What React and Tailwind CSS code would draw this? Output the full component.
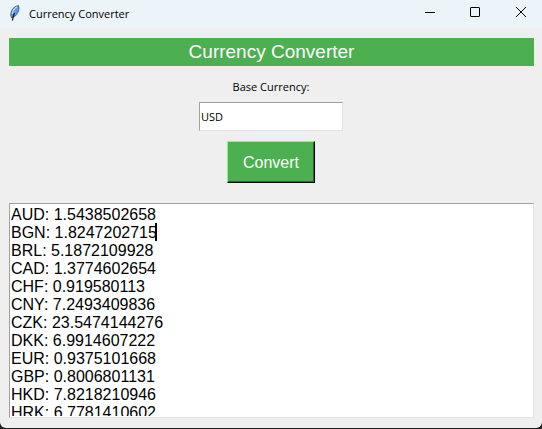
import { useState } from "react";

const RATES = [
  ["AUD", "1.5438502658"],
  ["BGN", "1.8247202715"],
  ["BRL", "5.1872109928"],
  ["CAD", "1.3774602654"],
  ["CHF", "0.919580113"],
  ["CNY", "7.2493409836"],
  ["CZK", "23.5474144276"],
  ["DKK", "6.9914607222"],
  ["EUR", "0.9375101668"],
  ["GBP", "0.8006801131"],
  ["HKD", "7.8218210946"],
  ["HRK", "6.7781410602"],
];

function Feather() {
  return (
    <svg className="h-4 w-4" viewBox="0 0 16 16" aria-hidden="true">
      <path d="M11.500 .5C8 1 5 3.500 4 7.500c-.4 2-.2 3.800.4 5.300C7.500 12.300 9.700 10 10.900 7.500c1.200-2.400 1.400-4.800.6-7z" fill="#5b9cf0" stroke="#4a5058" strokeWidth=".8" />
      <path d="M10 2C7.500 3.200 5.800 5.500 5.200 9" fill="none" stroke="#c4defa" strokeWidth="1.200" />
      <path d="M7.500 8C6.500 10 5.800 12 5.500 15.500" fill="none" stroke="#0c0e12" strokeWidth="1.200" />
    </svg>
  );
}

function TitleBar() {
  const control = "flex h-7 w-[46px] items-center justify-center";
  return (
    <header className="flex h-7 items-center bg-[#ebf4f9] pl-[7px]">
      <div className="pb-0.5">
        <Feather />
      </div>
      <span className="ml-1.5 flex-1 pb-px text-[11px] leading-4">Currency Converter</span>
      <div className="-mr-0.5 flex pb-1">
        <button type="button" aria-label="Minimize" className={control}>
          <svg className="h-3 w-3" viewBox="0 0 12 12"><path d="M2 6.500h10" stroke="#000" fill="none" /></svg>
        </button>
        <button type="button" aria-label="Maximize" className={control}>
          <svg className="h-3 w-3" viewBox="0 0 12 12"><rect x="1.500" y="1.500" width="9" height="9" rx=".5" stroke="#000" fill="none" /></svg>
        </button>
        <button type="button" aria-label="Close" className={control}>
          <svg className="h-3 w-3" viewBox="0 0 12 12"><path d="M1 1l10 10M11 1L1 11" stroke="#000" fill="none" /></svg>
        </button>
      </div>
    </header>
  );
}

export default function App() {
  const [base, setBase] = useState("USD");
  return (
    <div className="bg-[#202020] font-['Open_Sans','Noto_Sans',sans-serif] text-black">
      <div className="overflow-hidden rounded-b-md bg-[#efefef]">
        <TitleBar />
        <main className="pt-2.5 pr-2 pb-2.5 pl-[9px]">
          <h1 className="bg-[#4caf50] text-center font-['Liberation_Sans',Arial,sans-serif] text-[19px] leading-7 text-white">
            Currency Converter
          </h1>
          <form className="flex flex-col items-center pt-3 pr-px" onSubmit={(e) => e.preventDefault()}>
            <label htmlFor="base" className="text-[11px] leading-[18px]">Base Currency:</label>
            <input
              id="base"
              value={base}
              onChange={(e) => setBase(e.target.value)}
              className="mt-1.5 h-[29px] w-36 border border-t-[#a0a0a0] border-r-[#e3e3e3] border-b-[#e3e3e3] border-l-[#a0a0a0] bg-white px-px text-[11px] outline-none"
            />
            <button
              type="submit"
              className="mt-2.5 h-[42px] w-[88px] border border-t-[#90ee90] border-r-black border-b-black border-l-[#90ee90] bg-[#4caf50] pt-0.5 font-['Liberation_Sans',Arial,sans-serif] text-[16px] text-white shadow-[inset_-1px_-1px_0_#2c662e]"
            >
              Convert
            </button>
          </form>
          <div className="relative mt-5 border border-t-[#a0a0a0] border-r-[#e3e3e3] border-b-[#e3e3e3] border-l-[#a0a0a0] bg-white px-px pt-0.5 pb-px">
            <textarea
              aria-label="Exchange rates"
              readOnly
              value={RATES.map(([code, rate]) => code + ": " + rate).join("\n")}
              className="block h-[210px] w-full resize-none overflow-hidden font-['Liberation_Sans',Arial,sans-serif] text-[16px] leading-[18px] outline-none"
            />
            <span className="absolute top-[19px] left-[145px] h-[18px] w-0.5 bg-black" />
          </div>
        </main>
      </div>
      <div className="h-px" />
    </div>
  );
}
